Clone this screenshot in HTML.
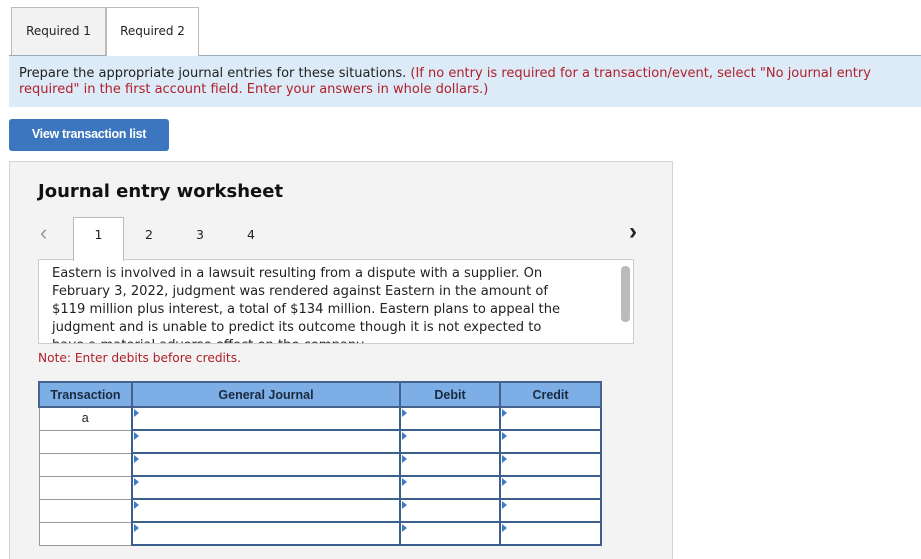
<!DOCTYPE html>
<html><head><style>
*{box-sizing:border-box;margin:0;padding:0}
html,body{width:921px;height:559px;overflow:hidden}
body{background:#fff;font-family:"DejaVu Sans","Liberation Sans",sans-serif;position:relative;color:#222}
.abs{position:absolute}
.tab{position:absolute;top:7px;height:48px;border:1px solid #bbb;border-bottom:none;font-size:12px;line-height:46px;text-align:center}
.banner{left:9px;top:55px;width:912px;height:52px;background:#dcebf7;border-top:1px solid #9ab;font-size:13px;line-height:16px;padding:10px 10px;color:#222}
.red{color:#b0202a}
.btn{left:9px;top:119px;width:160px;height:32px;background:#3b76be;border-radius:3px;color:#fff;font-family:"Liberation Sans",sans-serif;font-weight:bold;font-size:12.5px;line-height:31px;text-align:center;letter-spacing:-0.3px}
.panel{left:9px;top:161px;width:664px;height:400px;background:#f3f3f3;border:1px solid #d4d4d4}
table{position:absolute;left:38px;top:381px;border-collapse:collapse;font-family:"Liberation Sans",sans-serif;font-size:12.5px}
td,th{border:2px solid #3d5f8c;height:23px;padding:0}
th{background:#7daee6;color:#1a2a40;font-weight:bold;border-color:#44628c}
td.t{border:1px solid #999;background:#fff;text-align:center;vertical-align:top;line-height:20px}
td.i{background:#fff;position:relative}
td.i:before{content:"";position:absolute;left:1px;top:1px;border-left:5px solid #3d7cc9;border-top:4px solid transparent;border-bottom:4px solid transparent}
</style></head><body>
<div class="tab" style="left:11px;width:95px;background:#f2f2f2">Required 1</div>
<div class="tab" style="left:106px;width:93px;background:#fff;z-index:2;height:49px">Required 2</div>
<div class="abs banner">Prepare the appropriate journal entries for these situations. <span class="red">(If no entry is required for a transaction/event, select "No journal entry required" in the first account field. Enter your answers in whole dollars.)</span></div>
<div class="abs btn">View transaction list</div>
<div class="abs panel"></div>
<div class="abs" style="left:38px;top:181px;font-size:18px;font-weight:bold;color:#111">Journal entry worksheet</div>
<div class="abs" style="left:40px;top:220px;font-size:22px;color:#999;font-family:'Liberation Sans',sans-serif">&lsaquo;</div>
<div class="abs" style="left:73px;top:217px;width:51px;height:44px;background:#fff;border:1px solid #bbb;border-bottom:none;z-index:2;font-size:12.5px;text-align:center;line-height:34px">1</div>
<div class="abs" style="left:145px;top:227px;font-size:12.5px">2</div>
<div class="abs" style="left:196px;top:227px;font-size:12.5px">3</div>
<div class="abs" style="left:247px;top:227px;font-size:12.5px">4</div>
<div class="abs" style="left:629px;top:218px;font-size:24px;font-weight:bold;font-family:'Liberation Sans',sans-serif">&rsaquo;</div>
<div class="abs" style="left:38px;top:259px;width:596px;height:85px;background:#fff;border:1px solid #ccc;overflow:hidden;padding:5px 60px 5px 13px;font-size:13.1px;line-height:18px">Eastern is involved in a lawsuit resulting from a dispute with a supplier. On February 3, 2022, judgment was rendered against Eastern in the amount of $119 million plus interest, a total of $134 million. Eastern plans to appeal the judgment and is unable to predict its outcome though it is not expected to have a material adverse effect on the company.</div>
<div class="abs" style="left:621px;top:266px;width:9px;height:56px;background:#bbb;border-radius:4px"></div>
<div class="abs red" style="left:38px;top:351px;font-size:12.2px">Note: Enter debits before credits.</div>
<table>
<tr><th style="width:93px;height:25px">Transaction</th><th style="width:268px">General Journal</th><th style="width:100px">Debit</th><th style="width:101px">Credit</th></tr>
<tr><td class="t">a</td><td class="i"></td><td class="i"></td><td class="i"></td></tr>
<tr><td class="t"></td><td class="i"></td><td class="i"></td><td class="i"></td></tr>
<tr><td class="t"></td><td class="i"></td><td class="i"></td><td class="i"></td></tr>
<tr><td class="t"></td><td class="i"></td><td class="i"></td><td class="i"></td></tr>
<tr><td class="t"></td><td class="i"></td><td class="i"></td><td class="i"></td></tr>
<tr><td class="t"></td><td class="i"></td><td class="i"></td><td class="i"></td></tr>
</table>
</body></html>
